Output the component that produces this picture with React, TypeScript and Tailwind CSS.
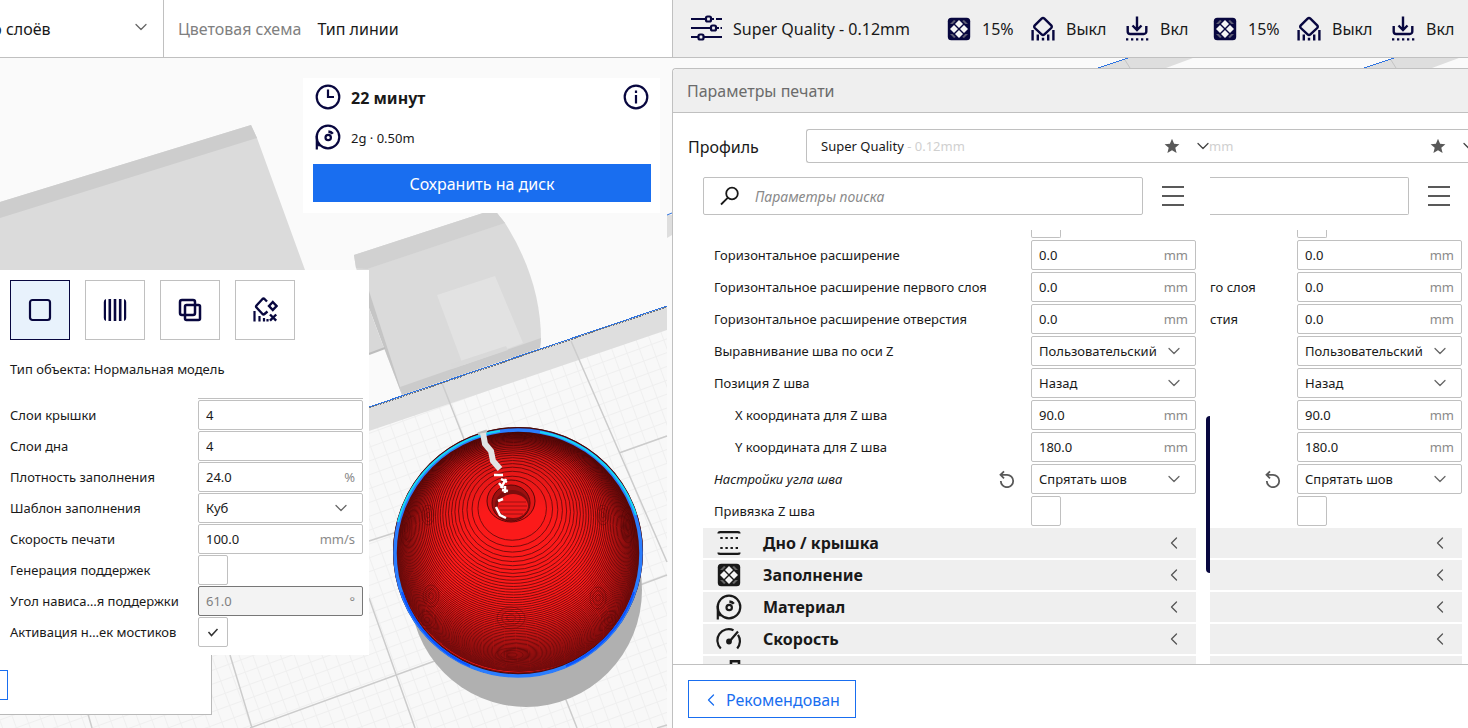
import type { ReactNode } from 'react';
import { ChevronDown, ChevronLeft } from 'lucide-react';
import { clsx } from 'clsx';

type Setting = {
  id: string;
  label: string;
  // what is left of the label in the narrow column
  tail?: string;
  kind: 'number' | 'select' | 'check';
  value?: string;
  unit?: string;
  indent?: boolean;
  changed?: boolean;
  disabled?: boolean;
  checked?: boolean;
};

const MODEL_SETTINGS: Setting[] = [
  { id: 'top', label: 'Слои крышки', kind: 'number', value: '4' },
  { id: 'bottom', label: 'Слои дна', kind: 'number', value: '4' },
  { id: 'density', label: 'Плотность заполнения', kind: 'number', value: '24.0', unit: '%' },
  { id: 'pattern', label: 'Шаблон заполнения', kind: 'select', value: 'Куб' },
  { id: 'speed', label: 'Скорость печати', kind: 'number', value: '100.0', unit: 'mm/s' },
  { id: 'support', label: 'Генерация поддержек', kind: 'check' },
  { id: 'angle', label: 'Угол нависа…я поддержки', kind: 'number', value: '61.0', unit: '°', disabled: true },
  { id: 'bridge', label: 'Активация н…ек мостиков', kind: 'check', checked: true },
];

const PRINT_SETTINGS: Setting[] = [
  { id: 'xy', label: 'Горизонтальное расширение', kind: 'number', value: '0.0', unit: 'mm' },
  { id: 'xy-first', label: 'Горизонтальное расширение первого слоя', tail: 'го слоя', kind: 'number', value: '0.0', unit: 'mm' },
  { id: 'xy-hole', label: 'Горизонтальное расширение отверстия', tail: 'стия', kind: 'number', value: '0.0', unit: 'mm' },
  { id: 'z-align', label: 'Выравнивание шва по оси Z', kind: 'select', value: 'Пользовательский' },
  { id: 'z-pos', label: 'Позиция Z шва', kind: 'select', value: 'Назад' },
  { id: 'z-x', label: 'X координата для Z шва', kind: 'number', value: '90.0', unit: 'mm', indent: true },
  { id: 'z-y', label: 'Y координата для Z шва', kind: 'number', value: '180.0', unit: 'mm', indent: true },
  { id: 'z-corner', label: 'Настройки угла шва', kind: 'select', value: 'Спрятать шов', changed: true },
  { id: 'z-rel', label: 'Привязка Z шва', kind: 'check' },
];

type IconProps = { className?: string };

function Icon({ className, children }: IconProps & { children: ReactNode }) {
  return (
    <svg viewBox="0 0 26 26" fill="none" stroke="currentColor" strokeWidth="2.2" className={clsx('size-[26px] shrink-0', className)}>
      {children}
    </svg>
  );
}

function InfillIcon({ className }: IconProps) {
  return (
    <Icon className={className}>
      <rect x="1.8" y="1.8" width="22.4" height="22.4" rx="3.5" fill="currentColor" stroke="none" />
      <path
        d="M13 4l4 4-4 4-4-4zM13 14l4 4-4 4-4-4zM8 9l4 4-4 4-4-4zM18 9l4 4-4 4-4-4z"
        fill="#f4f4f4"
        stroke="none"
      />
      <path
        d="M8 4l1.8 1-3 3L4 8zM18 4l-1.8 1 3 3L22 8zM8 22l1.8-1-3-3L4 18zM18 22l-1.8-1 3-3 2.800 0z"
        fill="#999"
        fillOpacity="0.6"
        stroke="none"
      />
    </Icon>
  );
}

function SupportIcon() {
  return (
    <Icon>
      <path d="M11.6 2.6l-6.8 6.8a2 2 0 0 0 0 2.6l6.8 6.4a2 2 0 0 0 2.8 0l6.8-6.4a2 2 0 0 0 0-2.6L14.4 2.6a2 2 0 0 0-2.8 0z" strokeWidth="2.4" />
      <path d="M2.6 14v10.5M7.8 18.5v6M13 21.8v2.7M18.2 18.5v6M23.4 14v10.5" strokeWidth="2.4" />
    </Icon>
  );
}

function AdhesionIcon() {
  return (
    <Icon>
      <path d="M13 .5v13M8.5 9.5L13 14l4.5-4.5" strokeWidth="2.4" />
      <path d="M3.7 10v5.500a2.500 2.500 0 0 0 2.500 2.500h13.600a2.500 2.500 0 0 0 2.500-2.500V10" strokeWidth="2.4" />
      <path d="M2 23.4h22.5" strokeDasharray="2.3 2.7" />
    </Icon>
  );
}

function SpoolIcon({ className }: IconProps) {
  return (
    <Icon className={className}>
      <circle cx="13" cy="13" r="11.3" />
      <path d="M1.8 12v13.5M1.8 18.5l3 3.5" />
      <circle cx="13.2" cy="13.5" r="2.7" />
      <path d="M13.4 7.6a6 6 0 0 1 4.4 2.2" strokeWidth="2.6" />
    </Icon>
  );
}

function SlidersIcon() {
  return (
    <svg viewBox="0 0 32 28" fill="none" stroke="currentColor" strokeWidth="2.2" className="h-7 w-8 shrink-0">
      <path d="M1 4h14M21 4h3M26 4h6M1 13h19M26 13h3M30.5 13h1.5M1 22h7M14 22h18" />
      <rect x="16" y="1.5" width="5" height="5" rx="1.5" />
      <rect x="21" y="10.5" width="5" height="5" rx="1.5" />
      <rect x="8.5" y="19.5" width="5" height="5" rx="1.5" />
    </svg>
  );
}

function StarIcon() {
  return (
    <svg viewBox="0 0 16 16" className="size-4 shrink-0 fill-[#595959]">
      <path d="M8 .8l2.1 5 5.3.4-4.1 3.5 1.3 5.3L8 12.200 3.400 15l1.300-5.300L.6 6.200l5.300-.4z" />
    </svg>
  );
}

function SettingControl({ setting, id }: { setting: Setting; id: string }) {
  const { kind, value, unit, disabled, checked, label } = setting;
  if (kind === 'check') {
    return (
      <div className="w-[165px] shrink-0">
        <div className="relative size-[30px]">
          <input id={id} type="checkbox" aria-label={label} defaultChecked={checked} className="peer block size-[30px] appearance-none rounded-[2px] border border-[#c0c0c0] bg-white" />
          <svg viewBox="0 0 30 30" fill="none" stroke="#333" strokeWidth="1.5" className="pointer-events-none absolute inset-0 hidden peer-checked:block">
            <path d="M10.5 15l3 3.5 6-6.5" />
          </svg>
        </div>
      </div>
    );
  }
  if (kind === 'select') {
    return (
      <div className="relative h-[30px] w-[165px] shrink-0">
        <select id={id} aria-label={label} className="block h-full w-full appearance-none rounded-[2px] border border-[#c0c0c0] bg-white pl-[7px] pt-0.5">
          <option>{value}</option>
        </select>
        <ChevronDown className="pointer-events-none absolute right-3 top-[5px] size-5 text-[#666]" strokeWidth={1.5} />
      </div>
    );
  }
  return (
    <div
      className={clsx(
        'flex h-[30px] w-[165px] shrink-0 items-center rounded-[2px] border px-[7px] pt-0.5',
        disabled ? 'border-[#777] bg-[#f3f3f3] text-[#808080]' : 'border-[#c0c0c0] bg-white',
      )}
    >
      <input id={id} aria-label={label} defaultValue={value} disabled={disabled} className="w-full min-w-0 flex-1 bg-transparent outline-none" />
      {unit && <span className="text-[#8a8a8a]">{unit}</span>}
    </div>
  );
}

function PrintRows({ narrow }: { narrow?: boolean }) {
  const prefix = narrow ? 'narrow' : 'wide';
  return (
    <div className={clsx('flex flex-col gap-[2px] text-[13px]', narrow ? 'min-w-0 flex-1' : 'w-[493px] shrink-0')}>
      <div className="flex h-2 shrink-0 justify-end">
        <div className="w-[165px]">
          <div className="h-full w-[30px] rounded-b-[2px] border border-t-0 border-[#c0c0c0]" />
        </div>
      </div>
      {PRINT_SETTINGS.map((s) => (
        <div key={s.id} className="flex h-[30px] shrink-0 items-center">
          <label
            htmlFor={`${prefix}-${s.id}`}
            className={clsx('flex-1 whitespace-nowrap pt-0.5', !narrow && (s.indent ? 'pl-8' : 'pl-[11px]'), s.changed && 'italic')}
          >
            {narrow ? s.tail : s.label}
          </label>
          {s.changed && (
            <button aria-label="Сбросить" className="mr-[15px] text-[#595959]">
              <svg viewBox="0 0 18 18" fill="none" stroke="currentColor" strokeWidth="1.8" className="size-[18px]">
                <path d="M2.5 4.8H9a6.2 6.2 0 1 1-6.2 6.2M6 1.3L2.5 4.8 6 8.3" />
              </svg>
            </button>
          )}
          <SettingControl setting={s} id={`${prefix}-${s.id}`} />
        </div>
      ))}
      <Category narrow={narrow} title="Дно / крышка">
        <Icon>
          <path d="M2.5 3.5Q2.5 2.1 4 2.1h18q1.5 0 1.5 1.4M2.5 22.5q0 1.4 1.5 1.4h18q1.5 0 1.5-1.4" />
          <path d="M4.3 8h19M4.3 18h19" strokeDasharray="2.4 2.7" />
        </Icon>
      </Category>
      <Category narrow={narrow} title="Заполнение">
        <InfillIcon />
      </Category>
      <Category narrow={narrow} title="Материал">
        <SpoolIcon />
      </Category>
      <Category narrow={narrow} title="Скорость">
        <Icon>
          <path d="M4.8 22.5A11.3 11.3 0 0 1 17.5 4.2M22 8.9a11.3 11.3 0 0 1-.8 13.6M13 16L22 5.5" />
          <circle cx="13" cy="15.5" r="1.8" fill="currentColor" />
        </Icon>
      </Category>
      <Category narrow={narrow}>
        <Icon>
          <path d="M15 8V3.2h8V12M15 6h-1" strokeWidth="2.6" />
        </Icon>
      </Category>
    </div>
  );
}

function Category({ title, narrow, children }: { title?: string; narrow?: boolean; children: ReactNode }) {
  return (
    <button aria-label={title ?? 'Перемещение'} className="flex h-[30px] w-full shrink-0 items-center bg-[#efefef] pl-[13px] pr-3 text-left text-base font-bold">
      {!narrow && children}
      {!narrow && <span className="pl-[21px]">{title}</span>}
      {title && <ChevronLeft className="ml-auto size-5 text-[#555]" strokeWidth={1.5} />}
    </button>
  );
}

function SummaryGroup() {
  return (
    <div className="flex shrink-0 items-center gap-[18px]">
      <span className="flex items-center gap-2.5"><InfillIcon /><span className="w-[30px]">15%</span></span>
      <span className="flex items-center gap-2.5"><SupportIcon /><span className="w-10">Выкл</span></span>
      <span className="flex items-center gap-2.5"><AdhesionIcon /><span className="w-7">Вкл</span></span>
    </div>
  );
}

// Layer rings of a sphere seen from slightly above, lowest layer first
const RINGS = Array.from({ length: 80 }, (_, i) => {
  const z = -38 + i * 1.95;
  const r = Math.sqrt(121 * 121 - z * z);
  return { cx: 518 - z * 0.05, cy: 550 - z * 0.36, rx: r, ry: r * 0.935 };
});

// Tight layer lines along the lower rim
const RIM = Array.from({ length: 14 }, (_, i) => ({ cy: 552 - i, rx: 121 - i * 0.2, ry: 121 - i }));

const MOIRE = [
  [406, 528, 6, 18], [628, 525, 7, 18], [428, 515, 6, 10], [603, 515, 6, 10], [431, 596, 8, 11],
  [598, 598, 8, 11], [427, 620, 9, 9], [610, 620, 9, 9], [511, 618, 14, 11], [512, 655, 17, 7], [518, 435, 14, 4],
];

function Scene() {
  return (
    <svg viewBox="0 0 1468 728" preserveAspectRatio="xMinYMin slice" className="absolute inset-0 -z-10 h-full w-full bg-[#fafafa]">
      <defs>
        <pattern id="fine" width="13" height="13" patternUnits="userSpaceOnUse" patternTransform="rotate(-20)">
          <path d="M0 .5H13M.5 0V13" stroke="#efefef" fill="none" />
        </pattern>
        <radialGradient id="shade" gradientUnits="userSpaceOnUse" cx="516" cy="568" r="138">
          <stop offset="0.45" stopColor="#300" stopOpacity="0" />
          <stop offset="0.8" stopColor="#300" stopOpacity="0.15" />
          <stop offset="1" stopColor="#200" stopOpacity="0.6" />
        </radialGradient>
      </defs>

      <path d="M0 202L251 125L257 138L305 270H0z" fill="#dbdbdb" />
      <path d="M0 202L251 125L257 138L0 218z" fill="#cdcdcd" />

      <path d="M354 255L483 213H497L505 223Q541 280 541 340L540 348L402 395L384 348L356 268z" fill="#dadada" />
      <path d="M354 255L483 213H497L505 223L367 269L356 268z" fill="#d1d1d1" />
      <path d="M400 387L541 338L540 348L402 395z" fill="#cbcbcb" />
      <path d="M369 291L400 387L402 395L369 308z" fill="#c5c5c5" />
      <path d="M369 308L384 348L369 354z" fill="#d8d8d8" />
      <path d="M369 354L385 348" stroke="#bdbdbd" strokeWidth="2" />
      <path d="M437 295L495 276L523 343L463 365z" fill="#e2e2e2" />
      <path d="M451 364L506 346L508 350L452 369z" fill="#d9d9d9" />

      <path d="M0 532L667 306V728H0z" fill="#f8f8f8" />
      <path d="M0 532L667 306V728H0z" fill="url(#fine)" />
      <path d="M369 407L667 306V330L369 431z" fill="#dedede" />
      <path
        d="M442 383L577 728M571 341L667 562M369 598L415 728M230 655L252 728M88 714L92 728M369 541L400 531M619 453L667 436M250 728L443 658M640 585L667 575M657 728L667 725"
        stroke="#cccccc"
        strokeWidth="1.5"
      />
      <path d="M369 408L667 307" stroke="#777" shapeRendering="crispEdges" strokeDasharray="2 1" />
      <path d="M369 407L667 306" stroke="#2f74e0" shapeRendering="crispEdges" />
      <path d="M667 215h5v20l-5 3z" fill="#dedede" />
      <path d="M667 215l5-2" stroke="#2f74e0" />

      {[1098, 1364].map((x) => (
        <g key={x} transform={`translate(${x} 58)`}>
          <path d="M0 10L30 0H95L68 10z" fill="#dedede" />
          <path d="M0 10L30 0" stroke="#2f74e0" shapeRendering="crispEdges" />
          <path d="M27 2l5 8" stroke="#c4c4c4" />
        </g>
      ))}

      <ellipse cx="526" cy="590" rx="116" ry="117" fill="#b0b0b0" />
      <circle cx="518" cy="552" r="125" fill="#4a0a0a" />
      {RIM.map((r, i) => (
        <ellipse key={i} cx="518" cy={r.cy} rx={r.rx} ry={r.ry} fill="#fb1a1a" stroke="#7a0d0d" />
      ))}
      {RINGS.map((r, i) => (
        <ellipse key={i} cx={r.cx} cy={r.cy} rx={r.rx} ry={r.ry} fill="#fb1a1a" stroke="#7a0d0d" />
      ))}
      {MOIRE.map(([cx, cy, rx, ry], i) => (
        <g key={i} fill="none" stroke="#5a0808" strokeOpacity="0.45">
          <ellipse cx={cx} cy={cy} rx={rx} ry={ry} />
          <ellipse cx={cx} cy={cy} rx={rx * 0.66} ry={ry * 0.66} />
          <ellipse cx={cx} cy={cy} rx={rx * 0.3} ry={ry * 0.3} />
        </g>
      ))}
      <circle cx="518" cy="552" r="123" fill="url(#shade)" />
      <ellipse cx="511" cy="501" rx="24" ry="21" fill="#e01616" stroke="#5a0808" />
      <ellipse cx="511" cy="503" rx="19" ry="18" fill="#9c1010" stroke="#5a0808" />
      <ellipse cx="512" cy="505" rx="17" ry="15" fill="#7c0d0d" />
      <ellipse cx="513" cy="506" rx="15" ry="12" fill="#ee1a1a" />
      <path d="M500 502h26M499 506h28M500 510h26M503 514h20" stroke="#8c1010" strokeWidth="0.8" />
      <circle cx="518" cy="552" r="124" fill="none" stroke="#4a0a0a" strokeWidth="2" />
      <circle cx="518" cy="553" r="123" fill="none" stroke="#2a7dff" strokeWidth="3.5" />
      <path d="M398 522A123 123 0 0 1 500 431M540 432A123 123 0 0 1 636 515" fill="none" stroke="#16d6f5" strokeWidth="2" />
      <path d="M402 592A123 123 0 0 0 470 666M566 666A123 123 0 0 0 634 592" fill="none" stroke="#0a52ff" strokeWidth="2" />
      <path d="M478 434L487 431" stroke="#bbb" strokeWidth="3" />
      <path d="M483 433L485 444L491 451L493 461L500 469" fill="none" stroke="#e2e2e2" strokeWidth="6" />
      <path d="M494 475h9M501 479l6 3M499 483l4 5M506 479l-5 9M502 490l6 1M505 486v7M498 501l5-2M496 507l4 8l6 3" fill="none" stroke="#fff" strokeWidth="2.5" />
    </svg>
  );
}

const TOOL = 'flex size-[60px] items-center justify-center border';

function ModelPanel() {
  return (
    <section className="mt-[57px] w-[369px] bg-white pb-2 pl-2.5 pr-1.5 pt-2.5">
      <div className="flex gap-[15px] text-[#08073f]">
        <button aria-label="Нормальная модель" className={clsx(TOOL, 'border-[#08073f] bg-[#e8f2fc]')}>
          <Icon><rect x="3" y="3" width="20" height="20" rx="2.5" /></Icon>
        </button>
        <button aria-label="Печать как поддержка" className={clsx(TOOL, 'border-[#c0c0c0]')}>
          <Icon>
            <path d="M4 2Q1.8 2.6 1.8 5v16q0 2.4 2.2 3zM22 2q2.2.6 2.2 3v16q0 2.4-2.2 3z" fill="currentColor" stroke="none" />
            <path d="M7.8 2v22M13 2v22M18.2 2v22" strokeWidth="2.6" />
          </Icon>
        </button>
        <button aria-label="Изменить параметры перекрытий" className={clsx(TOOL, 'border-[#c0c0c0]')}>
          <Icon>
            <rect x="3" y="3" width="15" height="15" rx="2" strokeWidth="2.5" />
            <rect x="8" y="8" width="15" height="15" rx="1.5" strokeWidth="2.5" />
          </Icon>
        </button>
        <button aria-label="Не поддерживать перекрытия" className={clsx(TOOL, 'border-[#c0c0c0]')}>
          <Icon>
            <path d="M15.5 14.5L12.5 17a1.5 1.5 0 0 1-2 0L4.5 10.5a1.5 1.5 0 0 1 0-2L10.5 2a1.5 1.5 0 0 1 2 0l2.5 2.5" strokeWidth="2.4" />
            <path d="M20.8 5l3.7 4-3.7 4-3.8-4zM18 17.5l6.2 6.2M24.2 17.5L18 23.7" strokeWidth="2.4" />
            <path d="M2.5 14v10.5M7.5 19v5.5M12 21v3.5M15.5 22v2.5" />
          </Icon>
        </button>
      </div>
      <p className="mt-[19px] text-[13px] leading-5">Тип объекта: Нормальная модель</p>
      <div className="mt-[18px] flex flex-col gap-px text-[13px]">
        <div className="ml-auto h-0.5 w-[165px] border-b border-[#c0c0c0]" />
        {MODEL_SETTINGS.map((s) => (
          <div key={s.id} className="flex h-[30px] items-center">
            <label htmlFor={`model-${s.id}`} className="flex-1 whitespace-nowrap pt-0.5">{s.label}</label>
            <SettingControl setting={s} id={`model-${s.id}`} />
          </div>
        ))}
      </div>
    </section>
  );
}

function JobCard() {
  return (
    <section className="mr-3 mt-5 flex w-[357px] flex-col gap-3.5 self-end bg-white pb-[11px] pl-2.5 pr-[9px] pt-1.5">
      <div className="flex items-center gap-2.5 px-0.5 text-[#08073f]">
        <Icon>
          <circle cx="13" cy="13" r="11.3" />
          <path d="M13 5.5V13h6" />
        </Icon>
        <b className="pt-0.5 text-base leading-6 text-[#191919]">22 минут</b>
        <button aria-label="Информация" className="ml-auto">
          <Icon>
            <circle cx="13" cy="13" r="11.3" />
            <path d="M13 11v8.5M13 6.5v2.4" />
          </Icon>
        </button>
      </div>
      <div className="flex items-center gap-2.5 pl-0.5">
        <SpoolIcon className="text-[#08073f]" />
        <span className="pt-0.5 text-[13px] leading-6">2g · 0.50m</span>
      </div>
      <button className="h-[38px] bg-[#196ef0] pt-0.5 text-base text-white">Сохранить на диск</button>
    </section>
  );
}

function SearchBox({ narrow }: { narrow?: boolean }) {
  return (
    <div className={clsx('flex items-center', narrow ? 'min-w-0 flex-1' : 'w-[493px] shrink-0')}>
      <div className={clsx('flex h-[38px] min-w-0 flex-1 items-center border border-[#c0c0c0] bg-white', narrow ? 'rounded-r-[2px] border-l-0' : 'rounded-[2px]')}>
        {!narrow && (
          <svg viewBox="0 0 20 20" fill="none" stroke="#191919" strokeWidth="1.8" className="ml-4 size-5">
            <circle cx="12" cy="7.5" r="5.8" />
            <path d="M7.9 11.7L1 18.5" />
          </svg>
        )}
        <input
          aria-label={narrow ? 'Поиск' : 'Параметры поиска'}
          placeholder={narrow ? undefined : 'Параметры поиска'}
          className="ml-[15px] min-w-0 flex-1 pt-0.5 text-sm italic outline-none placeholder:text-[#8a8a8a]"
        />
      </div>
      <button aria-label="Меню" className="ml-[18px] mr-[11px] shrink-0">
        <svg viewBox="0 0 24 22" stroke="#595959" strokeWidth="2" className="h-[22px] w-6">
          <path d="M1 2h22M1 11h22M1 20h22" />
        </svg>
      </button>
    </div>
  );
}

function PrintPanel() {
  return (
    <section className="mt-2.5 flex min-h-0 flex-1 flex-col rounded-tl border-l border-t border-[#c0c0c0] bg-white">
      <h2 className="flex h-11 shrink-0 items-center rounded-tl border-b border-[#c0c0c0] bg-[#efefef] pl-3.5 text-base text-[#6b6b6b]">Параметры печати</h2>
      <div className="mt-4 flex shrink-0 items-center pl-[15px]">
        <span className="w-[118px] pt-0.5 text-base">Профиль</span>
        <button className="flex h-[34px] min-w-0 flex-1 items-center overflow-hidden rounded-l-[3px] border border-r-0 border-[#c0c0c0] pl-3.5 text-[13px]">
          <span className="w-[343px] shrink-0 pt-0.5 text-left">Super Quality <span className="text-[#d0d0d0]">- 0.12mm</span></span>
          <StarIcon />
          <ChevronDown className="-mr-1 ml-[13px] size-5 shrink-0 text-[#444]" strokeWidth={1.5} />
          <span className="w-[221px] shrink-0 pt-0.5 text-left text-[#d0d0d0]">mm</span>
          <StarIcon />
          <ChevronDown className="ml-[13px] size-5 shrink-0 text-[#444]" strokeWidth={1.5} />
        </button>
      </div>
      <div className="mt-3.5 flex shrink-0 gap-3.5 pl-[30px] pr-1.5">
        <SearchBox />
        <SearchBox narrow />
      </div>
      <div className="mt-[15px] flex min-h-0 flex-1 overflow-hidden pl-[30px] pr-1.5">
        <PrintRows />
        <div className="flex w-3.5 shrink-0 justify-end">
          <div className="mt-[186px] h-[157px] w-1 rounded-l bg-[#08073f]" />
        </div>
        <PrintRows narrow />
      </div>
      <footer className="flex h-16 shrink-0 items-center border-t border-[#c0c0c0] pl-[15px] pt-1">
        <button className="flex h-[38px] w-[168px] items-center border border-[#196ef0] pl-3 pt-0.5 text-base text-[#196ef0]">
          <ChevronLeft className="mr-[5px] size-5" strokeWidth={1.5} />
          Рекомендован
        </button>
      </footer>
    </section>
  );
}

export default function App() {
  return (
    <div className="relative isolate flex h-screen overflow-hidden font-['Noto_Sans',sans-serif] text-[#191919]">
      <Scene />
      <main className="flex min-w-0 flex-1 flex-col">
        <header className="flex h-[58px] shrink-0 items-center border-b border-[#c0c0c0] bg-white text-base">
          <div className="relative flex h-full w-[164px] items-center border-r border-[#c0c0c0]">
            <select aria-label="Режим просмотра" className="-ml-2 w-full appearance-none">
              <option>р слоёв</option>
            </select>
            <ChevronDown className="pointer-events-none absolute right-3 top-[17px] size-5 text-[#666]" strokeWidth={1.5} />
          </div>
          <label htmlFor="scheme" className="ml-3.5 text-[#808080]">Цветовая схема</label>
          <select id="scheme" className="ml-4 flex-1 appearance-none">
            <option>Тип линии</option>
          </select>
        </header>
        <JobCard />
        <ModelPanel />
        <div className="h-[60px] w-[212px] border-b border-r border-[#b9b9b9] bg-white pt-[15px]">
          <button aria-label="Рекомендован" className="block h-[30px] w-2 border border-l-0 border-[#196ef0]" />
        </div>
      </main>
      <aside className="flex w-[796px] shrink-0 flex-col">
        <header className="flex h-[58px] shrink-0 items-center border-b border-l border-[#c0c0c0] bg-[#efefef] pl-[17px] text-base">
          <div className="flex shrink-0 items-center gap-6 [&_svg]:text-[#08073f]">
            <span className="flex w-[232px] items-center gap-[11px] whitespace-nowrap"><SlidersIcon />Super Quality - 0.12mm</span>
            <SummaryGroup />
            <SummaryGroup />
          </div>
        </header>
        <PrintPanel />
      </aside>
    </div>
  );
}
